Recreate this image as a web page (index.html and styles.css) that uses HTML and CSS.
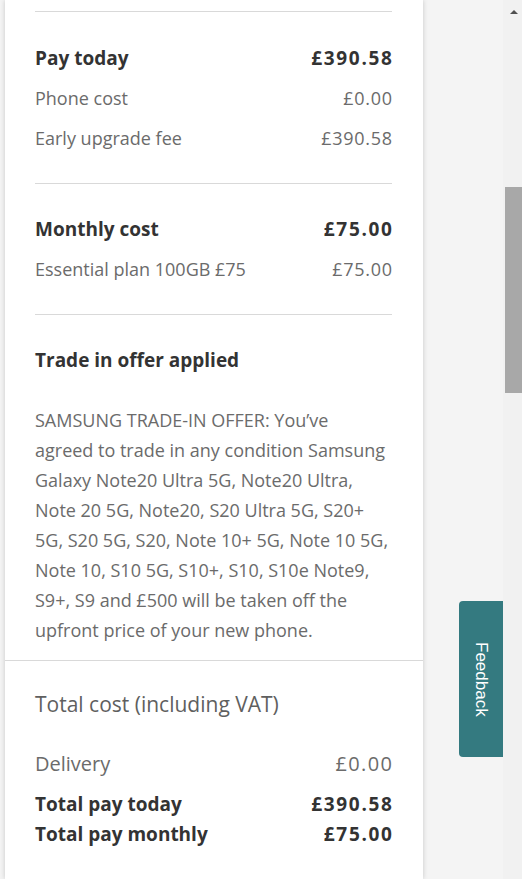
FILE: index.html
```html
<!DOCTYPE html>
<html lang="en">
<head>
<meta charset="utf-8">
<title>Basket summary</title>
<link rel="stylesheet" href="styles.css">
</head>
<body>
<div class="viewport">
  <main class="page">
    <div class="card">
      <div class="inner">
        <div class="top-cut"></div>
        <section class="group">
          <div class="row strong"><span>Pay today</span><span class="amt">£390.58</span></div>
          <div class="row"><span>Phone cost</span><span class="amt">£0.00</span></div>
          <div class="row"><span>Early upgrade fee</span><span class="amt">£390.58</span></div>
        </section>
        <section class="group">
          <div class="row strong"><span>Monthly cost</span><span class="amt">£75.00</span></div>
          <div class="row"><span>Essential plan 100GB £75</span><span class="amt">£75.00</span></div>
        </section>
        <section class="group offer">
          <div class="row strong"><span>Trade in offer applied</span></div>
          <p class="offer-text">SAMSUNG TRADE-IN OFFER: You’ve<br>agreed to trade in any condition Samsung<br>Galaxy Note20 Ultra 5G, Note20 Ultra,<br>Note 20 5G, Note20, S20 Ultra 5G, S20+<br>5G, S20 5G, S20, Note 10+ 5G, Note 10 5G,<br>Note 10, S10 5G, S10+, S10, S10e Note9,<br>S9+, S9 and £500 will be taken off the<br>upfront price of your new phone.</p>
        </section>
      </div>
      <section class="totals">
        <div class="totals-title">Total cost (including VAT)</div>
        <div class="row delivery"><span>Delivery</span><span class="amt">£0.00</span></div>
        <div class="row total strong"><span>Total pay today</span><span class="amt">£390.58</span></div>
        <div class="row total strong"><span>Total pay monthly</span><span class="amt">£75.00</span></div>
      </section>
    </div>
    <button class="feedback" type="button">Feedback</button>
  </main>
  <div class="scrollbar">
    <div class="arrow"></div>
    <div class="thumb"></div>
  </div>
</div>
</body>
</html>
```
FILE: styles.css
```css
* { box-sizing: border-box; }
html, body { margin: 0; padding: 0; }
body {
  font-family: "Open Sans", "DejaVu Sans", sans-serif;
  background: #f4f4f4;
  color: #666;
}
.viewport {
  display: flex;
  height: 879px;
  overflow: hidden;
}
.page {
  flex: 1;
  position: relative;
  background: #f4f4f4;
}
.card {
  width: 418px;
  margin-left: 5px;
  min-height: 879px;
  background: #fff;
  box-shadow: 0 0 5px rgba(0,0,0,0.18);
}
.inner {
  padding: 0 31px 0 30px;
}
.top-cut {
  height: 12px;
  border-bottom: 1px solid #d9d9d9;
}
.group {
  padding: 25px 0 25px;
  border-bottom: 1px solid #d9d9d9;
}
.inner .group:first-of-type { padding-top: 26px; }
.row {
  display: flex;
  justify-content: space-between;
  height: 40px;
  line-height: 40px;
  font-size: 18px;
  color: #6b6b6b;
}
.row .amt {
  letter-spacing: 0.7px;
  margin-right: -0.7px;
}
.row.strong {
  font-weight: 700;
  font-size: 19px;
  color: #333;
}
.row.strong .amt {
  letter-spacing: 1.7px;
  margin-right: -1.7px;
}
.offer { border-bottom: none; padding-bottom: 15px; }
.offer-text {
  margin: 25px 0 0;
  font-size: 18px;
  line-height: 30px;
  white-space: nowrap;
  color: #6b6b6b;
}
.totals {
  border-top: 1px solid #d9d9d9;
  padding: 23px 31px 0 30px;
}
.totals-title {
  height: 40px;
  line-height: 40px;
  font-size: 21px;
  color: #5f5f5f;
}
.row.delivery {
  margin-top: 20px;
  font-size: 20px;
}
.row.delivery .amt {
  letter-spacing: 1.4px;
  margin-right: -1.4px;
}
.row.total { height: 30px; line-height: 30px; }
.delivery + .total { margin-top: 5px; }
.feedback {
  position: absolute;
  right: 0;
  top: 601px;
  width: 44px;
  height: 156px;
  padding: 0;
  border: none;
  border-radius: 4px 0 0 4px;
  background: #347a80;
  color: #fff;
  font-family: "Liberation Sans", Arial, sans-serif;
  font-size: 17px;
  writing-mode: vertical-rl;
  text-align: center;
}
.scrollbar {
  width: 19px;
  background: #f1f1f1;
  padding-left: 2px;
  display: flex;
  flex-direction: column;
}
.arrow {
  width: 0;
  height: 0;
  margin: 10px auto 0 5px;
  border-left: 4px solid transparent;
  border-right: 4px solid transparent;
  border-bottom: 4px solid #505050;
}
.thumb {
  margin-top: 173px;
  height: 206px;
  background: #a8a8a8;
}
```
